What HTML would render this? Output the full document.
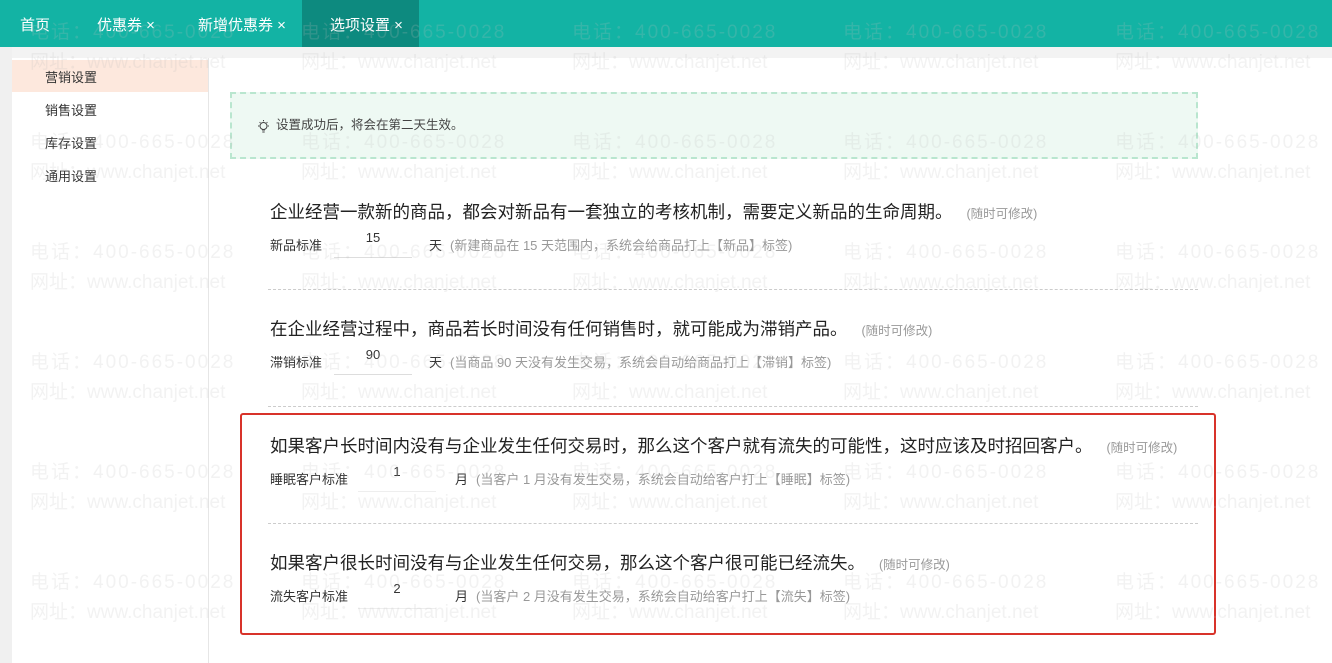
<!DOCTYPE html>
<html><head><meta charset="utf-8"><style>
*{margin:0;padding:0;box-sizing:border-box}
body{width:1332px;height:663px;overflow:hidden;position:relative;background:#fff;font-family:"Liberation Sans","Noto Sans CJK SC",sans-serif;color:#333}
.top{position:absolute;left:0;top:0;width:1332px;height:47px;background:#13b3a4}
.tab{position:absolute;top:0;height:47px;line-height:52px;color:#fff;font-size:15px;white-space:nowrap}
.tab.act{background:#0d8a7f}
.gapl{position:absolute;left:0;top:47px;width:12px;height:616px;background:#f0f0f0}
.gapt{position:absolute;left:0;top:47px;width:1332px;height:11px;background:#f3f3f3}
.side{position:absolute;left:12px;top:58px;width:197px;height:605px;background:#fff;border-right:1px solid #e6e6e6}
.si{position:absolute;left:33px;font-size:13px;color:#333}
.sact{position:absolute;left:0;top:2px;width:196px;height:32px;background:#fde8dd}
.notice{position:absolute;left:230px;top:92px;width:968px;height:67px;border:2px dashed #b9e6cf;background:#eef9f3;font-size:12.5px;color:#444;line-height:63px;padding-left:44px}
.h{position:absolute;left:270px;font-size:17.5px;color:#222;white-space:nowrap}
.h small{font-size:12.5px;color:#999;margin-left:14px}
.l{position:absolute;left:270px;font-size:13px;color:#333;white-space:nowrap}
.v{position:absolute;font-size:13px;color:#333;width:78px;text-align:center;left:334px;border-bottom:1px solid #ddd;height:28px}
.u{position:absolute;font-size:13px;color:#333;white-space:nowrap}
.u span{font-size:13px;color:#999;margin-left:8px}
.dash{position:absolute;left:268px;width:930px;border-top:1px dashed #ccc}
.red{position:absolute;left:240px;top:413px;width:976px;height:222px;border:2px solid #d8332a;border-radius:3px}
.wm{position:absolute;font-size:19px;color:rgba(190,190,190,0.2);white-space:nowrap;pointer-events:none}
.wm.a{letter-spacing:2px}
</style></head><body>
<div class="top"></div>
<div class="tab" style="left:20px">首页</div>
<div class="tab" style="left:97px">优惠券 ×</div>
<div class="tab" style="left:198px">新增优惠券 ×</div>
<div class="tab act" style="left:302px;width:117px;padding-left:28px">选项设置 ×</div>
<div class="gapt"></div>
<div class="gapl"></div>
<div class="side">
<div class="sact"></div>
<div class="si" style="top:9px">营销设置</div>
<div class="si" style="top:42px">销售设置</div>
<div class="si" style="top:75px">库存设置</div>
<div class="si" style="top:108px">通用设置</div>
</div>
<div class="notice"><svg style="position:absolute;left:24px;top:25px" width="15" height="15" viewBox="0 0 15 15" fill="none" stroke="#444" stroke-width="1"><circle cx="7.5" cy="7" r="3.5"/><path d="M6 11h3M6.3 13h2.4M7.5 1v1.2M2 7h1.2M11.8 7H13M3.6 3.1l.8.8M11.4 3.1l-.8.8"/></svg>设置成功后，将会在第二天生效。</div>

<div class="h" style="top:199px">企业经营一款新的商品，都会对新品有一套独立的考核机制，需要定义新品的生命周期。<small>(随时可修改)</small></div>
<div class="l" style="top:235px">新品标准</div>
<div class="v" style="top:230px">15</div>
<div class="u" style="left:429px;top:235px">天<span>(新建商品在 15 天范围内，系统会给商品打上【新品】标签)</span></div>
<div class="dash" style="top:289px"></div>

<div class="h" style="top:316px">在企业经营过程中，商品若长时间没有任何销售时，就可能成为滞销产品。<small>(随时可修改)</small></div>
<div class="l" style="top:352px">滞销标准</div>
<div class="v" style="top:347px">90</div>
<div class="u" style="left:429px;top:352px">天<span>(当商品 90 天没有发生交易，系统会自动给商品打上【滞销】标签)</span></div>
<div class="dash" style="top:406px"></div>

<div class="h" style="top:433px">如果客户长时间内没有与企业发生任何交易时，那么这个客户就有流失的可能性，这时应该及时招回客户。<small>(随时可修改)</small></div>
<div class="l" style="top:469px">睡眠客户标准</div>
<div class="v" style="top:464px;left:358px;width:78px;border-color:#eee">1</div>
<div class="u" style="left:455px;top:469px">月<span>(当客户 1 月没有发生交易，系统会自动给客户打上【睡眠】标签)</span></div>
<div class="dash" style="top:523px"></div>

<div class="h" style="top:550px">如果客户很长时间没有与企业发生任何交易，那么这个客户很可能已经流失。<small>(随时可修改)</small></div>
<div class="l" style="top:586px">流失客户标准</div>
<div class="v" style="top:581px;left:358px;width:78px;border-color:#eee">2</div>
<div class="u" style="left:455px;top:586px">月<span>(当客户 2 月没有发生交易，系统会自动给客户打上【流失】标签)</span></div>
<div class="red"></div>

<div class="wm a" style="left:30px;top:17px">电话：400-665-0028</div><div class="wm" style="left:30px;top:47px">网址：www.chanjet.net</div>
<div class="wm a" style="left:301px;top:17px">电话：400-665-0028</div><div class="wm" style="left:301px;top:47px">网址：www.chanjet.net</div>
<div class="wm a" style="left:572px;top:17px">电话：400-665-0028</div><div class="wm" style="left:572px;top:47px">网址：www.chanjet.net</div>
<div class="wm a" style="left:843px;top:17px">电话：400-665-0028</div><div class="wm" style="left:843px;top:47px">网址：www.chanjet.net</div>
<div class="wm a" style="left:1115px;top:17px">电话：400-665-0028</div><div class="wm" style="left:1115px;top:47px">网址：www.chanjet.net</div>
<div class="wm a" style="left:30px;top:127px">电话：400-665-0028</div><div class="wm" style="left:30px;top:157px">网址：www.chanjet.net</div>
<div class="wm a" style="left:301px;top:127px">电话：400-665-0028</div><div class="wm" style="left:301px;top:157px">网址：www.chanjet.net</div>
<div class="wm a" style="left:572px;top:127px">电话：400-665-0028</div><div class="wm" style="left:572px;top:157px">网址：www.chanjet.net</div>
<div class="wm a" style="left:843px;top:127px">电话：400-665-0028</div><div class="wm" style="left:843px;top:157px">网址：www.chanjet.net</div>
<div class="wm a" style="left:1115px;top:127px">电话：400-665-0028</div><div class="wm" style="left:1115px;top:157px">网址：www.chanjet.net</div>
<div class="wm a" style="left:30px;top:237px">电话：400-665-0028</div><div class="wm" style="left:30px;top:267px">网址：www.chanjet.net</div>
<div class="wm a" style="left:301px;top:237px">电话：400-665-0028</div><div class="wm" style="left:301px;top:267px">网址：www.chanjet.net</div>
<div class="wm a" style="left:572px;top:237px">电话：400-665-0028</div><div class="wm" style="left:572px;top:267px">网址：www.chanjet.net</div>
<div class="wm a" style="left:843px;top:237px">电话：400-665-0028</div><div class="wm" style="left:843px;top:267px">网址：www.chanjet.net</div>
<div class="wm a" style="left:1115px;top:237px">电话：400-665-0028</div><div class="wm" style="left:1115px;top:267px">网址：www.chanjet.net</div>
<div class="wm a" style="left:30px;top:347px">电话：400-665-0028</div><div class="wm" style="left:30px;top:377px">网址：www.chanjet.net</div>
<div class="wm a" style="left:301px;top:347px">电话：400-665-0028</div><div class="wm" style="left:301px;top:377px">网址：www.chanjet.net</div>
<div class="wm a" style="left:572px;top:347px">电话：400-665-0028</div><div class="wm" style="left:572px;top:377px">网址：www.chanjet.net</div>
<div class="wm a" style="left:843px;top:347px">电话：400-665-0028</div><div class="wm" style="left:843px;top:377px">网址：www.chanjet.net</div>
<div class="wm a" style="left:1115px;top:347px">电话：400-665-0028</div><div class="wm" style="left:1115px;top:377px">网址：www.chanjet.net</div>
<div class="wm a" style="left:30px;top:457px">电话：400-665-0028</div><div class="wm" style="left:30px;top:487px">网址：www.chanjet.net</div>
<div class="wm a" style="left:301px;top:457px">电话：400-665-0028</div><div class="wm" style="left:301px;top:487px">网址：www.chanjet.net</div>
<div class="wm a" style="left:572px;top:457px">电话：400-665-0028</div><div class="wm" style="left:572px;top:487px">网址：www.chanjet.net</div>
<div class="wm a" style="left:843px;top:457px">电话：400-665-0028</div><div class="wm" style="left:843px;top:487px">网址：www.chanjet.net</div>
<div class="wm a" style="left:1115px;top:457px">电话：400-665-0028</div><div class="wm" style="left:1115px;top:487px">网址：www.chanjet.net</div>
<div class="wm a" style="left:30px;top:567px">电话：400-665-0028</div><div class="wm" style="left:30px;top:597px">网址：www.chanjet.net</div>
<div class="wm a" style="left:301px;top:567px">电话：400-665-0028</div><div class="wm" style="left:301px;top:597px">网址：www.chanjet.net</div>
<div class="wm a" style="left:572px;top:567px">电话：400-665-0028</div><div class="wm" style="left:572px;top:597px">网址：www.chanjet.net</div>
<div class="wm a" style="left:843px;top:567px">电话：400-665-0028</div><div class="wm" style="left:843px;top:597px">网址：www.chanjet.net</div>
<div class="wm a" style="left:1115px;top:567px">电话：400-665-0028</div><div class="wm" style="left:1115px;top:597px">网址：www.chanjet.net</div>
</body></html>
